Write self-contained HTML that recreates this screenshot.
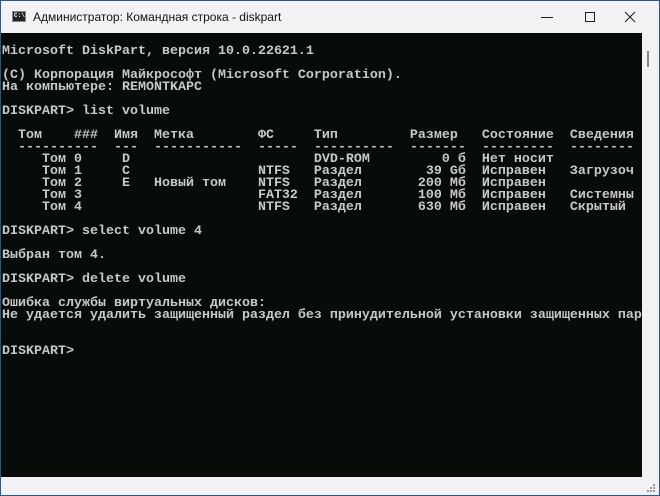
<!DOCTYPE html>
<html><head><meta charset="utf-8"><style>
html,body{margin:0;padding:0;width:660px;height:496px;overflow:hidden;background:#f4f1f5;}
.win{position:absolute;left:0;top:0;width:658px;height:494px;border:1px solid #1e5b94;background:#f4f1f5;}
.title{position:absolute;left:32px;top:9px;font:12px "Liberation Sans",sans-serif;color:#111;}
.icon{position:absolute;left:11px;top:10px;width:14px;height:11px;background:#222;border:1px solid #888;box-sizing:border-box;}
.icon:after{content:"C:\\";position:absolute;left:1px;top:0px;font:bold 6px "Liberation Mono",monospace;color:#fff;}
.con{position:absolute;left:0;top:32px;width:641px;height:444px;background:#070c09;}
pre{position:absolute;left:1px;top:13px;margin:0;font:bold 13.33px/12px "Liberation Mono",monospace;color:#c8c8c8;letter-spacing:0;}
.sb{position:absolute;left:646px;top:50px;width:2px;height:16px;background:#888;}
</style></head><body>
<div class="win">
<div class="icon"></div>
<div class="title">Администратор: Командная строка - diskpart</div>
<svg style="position:absolute;left:530px;top:5px" width="120" height="22">
<line x1="10" y1="11.5" x2="22" y2="11.5" stroke="#222" stroke-width="1"/>
<rect x="54.5" y="6.5" width="9" height="9" fill="none" stroke="#222" stroke-width="1"/>
<line x1="94" y1="6" x2="104" y2="16" stroke="#222" stroke-width="1.1"/>
<line x1="104" y1="6" x2="94" y2="16" stroke="#222" stroke-width="1.1"/>
</svg>
<div class="con"><pre>Microsoft DiskPart, версия 10.0.22621.1

(C) Корпорация Майкрософт (Microsoft Corporation).
На компьютере: REMONTKAPC

DISKPART&gt; list volume

  Том    ###  Имя  Метка        ФС     Тип         Размер   Состояние  Сведения
  ----------  ---  -----------  -----  ----------  -------  ---------  --------
     Том 0     D                       DVD-ROM         0 б  Нет носит
     Том 1     C                NTFS   Раздел        39 Gб  Исправен   Загрузоч
     Том 2     E   Новый том    NTFS   Раздел       200 Мб  Исправен
     Том 3                      FAT32  Раздел       100 Мб  Исправен   Системны
     Том 4                      NTFS   Раздел       630 Мб  Исправен   Скрытый

DISKPART&gt; select volume 4

Выбран том 4.

DISKPART&gt; delete volume

Ошибка службы виртуальных дисков:
Не удается удалить защищенный раздел без принудительной установки защищенных пар


DISKPART&gt;</pre></div>
<div class="sb"></div>
<svg style="position:absolute;left:646px;top:483px" width="10" height="10">
<rect x="6" y="0" width="2" height="2" fill="#999"/><rect x="3" y="3" width="2" height="2" fill="#999"/><rect x="6" y="3" width="2" height="2" fill="#999"/>
<rect x="0" y="6" width="2" height="2" fill="#999"/><rect x="3" y="6" width="2" height="2" fill="#999"/><rect x="6" y="6" width="2" height="2" fill="#999"/>
</svg>
</div>
</body></html>
